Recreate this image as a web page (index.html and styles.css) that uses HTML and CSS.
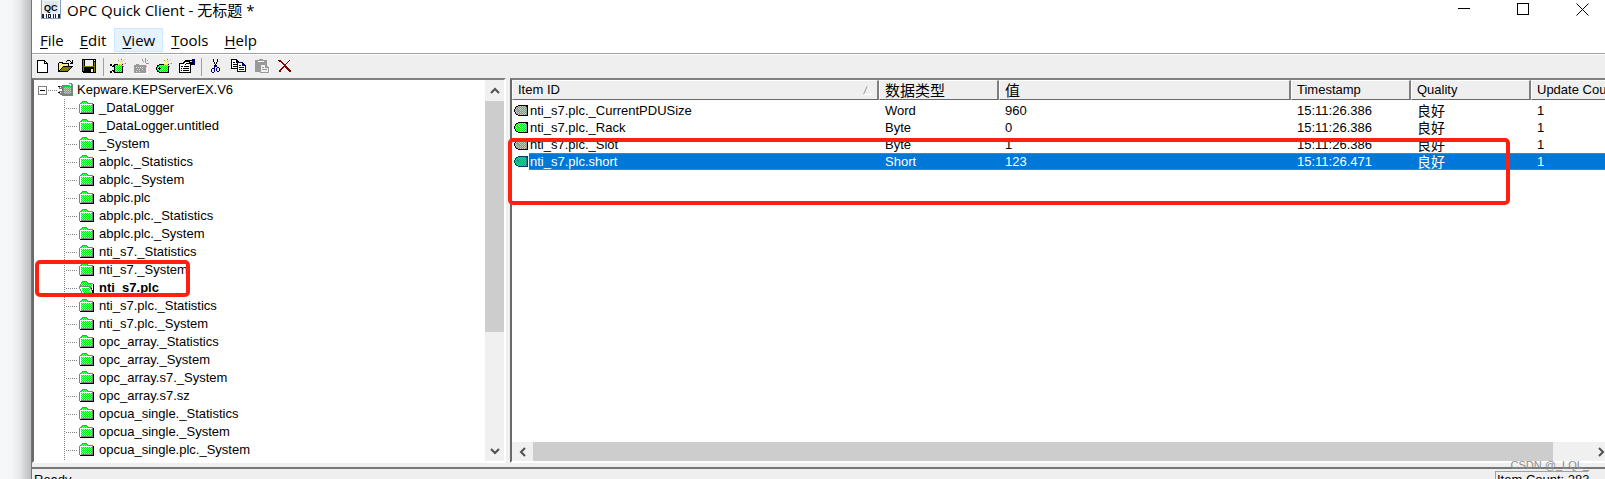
FILE: index.html
```html
<!DOCTYPE html>
<html lang="zh-CN">
<head>
<meta charset="utf-8">
<title>OPC Quick Client</title>
<link rel="stylesheet" href="styles.css">
</head>
<body>
<svg class="sprites" aria-hidden="true">
  <defs>
    <pattern id="dither" width="2" height="2" patternUnits="userSpaceOnUse"><path fill="#c4d8c4" d="M0 0h2v2H0z"/><path fill="#00ef18" d="M0 0h1v1H0zM1 1h1v1H1z"/></pattern>
    <pattern id="dither-teal" width="2" height="2" patternUnits="userSpaceOnUse"><path fill="#60a8b8" d="M0 0h2v2H0z"/><path fill="#00b578" d="M0 0h1v1H0zM1 1h1v1H1z"/></pattern>
    <symbol id="folder" viewBox="0 0 16 14">
      <path fill="#808080" d="M2 1h1V0h5v1h1v1h5v1H1V2h1zM0 3h1v9H0zM13 3h1v1h-1z"/>
      <path fill="url(#dither)" d="M3 1h5v1h1v1H2V2h1zM2 4h11v8H2z"/>
      <path fill="#808080" d="M9 2h5v1H9z"/>
      <path fill="#fff" d="M1 3h12v1H2v8H1z"/>
      <path fill="#808080" d="M13 3h1v9h-1zM1 12h12v-1H2v1z"/>
      <path fill="#000" d="M14 3h1v10H1v-1h13z"/>
    </symbol>
    <symbol id="folder-open" viewBox="0 0 16 14">
      <path fill="url(#dither)" d="M3 1h5l1 2h4v9H3L1 6h1z"/>
      <path fill="#fff" d="M1 6h9l3 5v1H3z"/>
      <path fill="url(#dither)" d="M3 7h7l3 5H4z"/>
      <path fill="#808080" d="M3 0h5v1H3zM2 1h1v2H2zM8 1h1v1H8zM9 2h5v1H9zM1 3h1v2H1zM0 5h11v1H0zM0 6h1v2H0zM1 8h1v2H1zM2 10h1v2H2zM11 6h1v2h-1zM12 8h1v2h-1z"/>
      <path fill="#000" d="M14 3h1v10H3v-1h11zM12 7h1v1h-1zM13 9h1v3h-1z"/>
    </symbol>
    <symbol id="server" viewBox="0 0 16 14">
      <path fill="#808080" d="M4 2h8v1h1V1h-2V0h3v1h1v12H4v-1H2v-1h2zM1 3h3v3H1zM1 8h3v3H1z"/>
      <path fill="#fff" d="M2 4h1v1H2zM2 9h1v1H2z"/><path fill="#000" d="M0 3h2v1H0zM0 9h2v1H0z"/>
      <path fill="#00d832" d="M5 3h8v8H5z"/><path fill="url(#dither)" d="M6 4h7v7H6z"/>
    </symbol>
    <symbol id="tag" viewBox="0 0 15 11">
      <path fill="#000" d="M4 0h10v11H4V10H2V9H1V7H0V4h1V2h1V1h2z"/>
      <path fill="url(#dither)" d="M4 1h8v9H4V9H2V7H1V4h1V2h2z"/><path fill="#999" d="M3 4h2v2H3zM12 2h1v8h-1z"/>
    </symbol>
    <symbol id="tag-selected" viewBox="0 0 15 11">
      <path fill="#003c70" d="M4 0h10v11H4V10H2V9H1V7H0V4h1V2h1V1h2z"/>
      <path fill="url(#dither-teal)" d="M4 1h8v9H4V9H2V7H1V4h1V2h2z"/><path fill="#4878a8" d="M3 4h2v2H3zM12 2h1v8h-1z"/>
    </symbol>
    <symbol id="rays" viewBox="0 0 16 16">
      <path fill="none" stroke="#f2e33c" d="M8.5 2.5l3 3M14.500 1.500l-3 3M11.500 0v4M15 5.500h-3M14.500 9.500l-3-3M8 6.500h3"/>
      <path fill="#8d8d45" d="M11 1h1v1h-1zM15 5h1v1h-1zM8 2h1v1H8zM13 8h1v1h-1z"/>
    </symbol>
  </defs>
</svg>

<div class="desktop">
<div class="window">
  <header class="titlebar">
    <svg class="app-icon" viewBox="0 0 20 20" aria-hidden="true">
      <path fill="#8a9bc4" d="M0 0h20v19H0z"/><path fill="#eef3fa" d="M1 0h18v18H1z"/><path fill="#dfe6ec" d="M3 1h14v12H3z"/>
      <text class="app-icon-text" x="3" y="11">QC</text>
      <path fill="#223" d="M1 14h2v4H1zM5 14h1v4H5zM7 14h3v1H7zM7 17h3v1H7zM7 15h1v2H7zM9 15h1v2H9zM12 14h1v4h-1zM14 14h1v4h-1zM17 14h2v4h-2z"/>
    </svg>
    <h1 class="title">OPC Quick Client - 无标题 *</h1>
    <div class="window-controls">
      <button class="control" aria-label="Minimize"><svg viewBox="0 0 13 13"><path d="M0 5.500h12"/></svg></button>
      <button class="control" aria-label="Maximize"><svg viewBox="0 0 13 13"><path d="M.5 .5h11v11H.5z"/></svg></button>
      <button class="control" aria-label="Close"><svg class="smooth" viewBox="0 0 13 13"><path d="M.5 .5l12 12M12.500 .5l-12 12"/></svg></button>
    </div>
  </header>
  <nav class="menubar">
    <button class="menu"><u>F</u>ile</button>
    <button class="menu"><u>E</u>dit</button>
    <button class="menu menu-hover"><u>V</u>iew</button>
    <button class="menu"><u>T</u>ools</button>
    <button class="menu"><u>H</u>elp</button>
  </nav>
  <div class="toolbar" role="toolbar">
    <button class="tool" aria-label="New"><svg viewBox="0 0 16 16"><path fill="#000" d="M2 2h8v1h1v1h1v1h1v10H2z"/><path fill="#fff" d="M3 3h6v3h3v8H3zM10 4h1v1h-1z"/></svg></button>
    <button class="tool" aria-label="Open"><svg viewBox="0 0 16 16"><path fill="#000" d="M9 2h3v1H9zM12 3h1v1h-1zM14 2h1v4h-3V5h1V4h1zM8 3h1v1H8zM1 4h4v1h6v3h4v1h-1v1h-1v1h-1v1h-1v1h-1v1H0V5h1z"/><path fill="#f5f08c" d="M1 5h3v1h6v2H5v1H4v1H3v1H2v1H1z"/><path fill="#808000" d="M5 9h8v1h-1v1h-1v1h-1v1H2v-1h1v-1h1v-1h1z"/></svg></button>
    <button class="tool" aria-label="Save"><svg viewBox="0 0 16 16"><path fill="#000" d="M1 1h14v14H2v-1H1z"/><path fill="#808000" d="M2 2h1v11H2zM13 4h1v10h-1zM3 8h10v1H3z"/><path fill="#efefef" d="M4 2h8v6H4zM13 2h1v1h-1zM10 11h2v3h-2z"/></svg></button>
    <span class="separator"></span>
    <button class="tool" aria-label="New server"><svg viewBox="0 0 16 16"><path fill="#000" d="M4 6h9v9H4v-1H2v1H0v-2h2v-1h2V9H2V8H0V6h2v1h2z"/><path fill="#fff" d="M2 7h1v1H2zM2 13h1v1H2z"/><path fill="url(#dither)" d="M5 7h7v7H5z"/><use href="#rays"/></svg></button>
    <button class="tool" aria-label="New group" disabled><svg viewBox="0 0 16 16"><path fill="#999" d="M1 7h2V6h3v1h7v8H1zM9 1h1v2H9zM12 0h1v5h-1zM14 2h1v1h-1zM13 5h3v1h-3zM10 3h1v1h-1zM13 8h2v1h-2z"/><path fill="#ddd" d="M3 9h1v1H3zM5 9h1v1H5zM7 9h1v1H7zM9 9h1v1H9zM4 11h1v1H4zM6 11h1v1H6zM9 11h1v1H9zM3 13h1v1H3zM6 13h1v1H6z"/><path fill="#fff" d="M2 15h12V8h1v8H2z"/></svg></button>
    <button class="tool" aria-label="New item"><svg viewBox="0 0 16 16"><path fill="#000" d="M3 6h10v9H3v-1H1v-2H0V9h1V7h2z"/><path fill="url(#dither)" d="M3 7h9v7H3v-1H2v-1H1V9h1V8h1z"/><path fill="#000" d="M3 9h1v1h1v1H4v1H3v-1H2v-1h1z"/><use href="#rays"/></svg></button>
    <button class="tool" aria-label="Properties"><svg viewBox="0 0 16 16"><path fill="#000" d="M0 5h4V4h1V3h1V2h7v1h-2v1h3v3h-2v8H0z"/><path fill="#fff" d="M1 6h10v8H1zM6 4h4v2H5V5h1z"/><path fill="#000080" d="M13 1h3v6h-2V4h-1z"/><path fill="#000" d="M2 8h2v1H2zM5 8h5v1H5zM2 10h1v1H2zM4 10h6v1H4zM2 12h1v1H2zM4 12h6v1H4zM7 5h4v1H7zM6 6h1v1H6z"/></svg></button>
    <span class="separator"></span>
    <button class="tool" aria-label="Cut"><svg viewBox="0 0 16 16"><path fill="#000" d="M5 1h1v3H5zM9 1h1v3H9zM6 4h1v2H6zM8 4h1v2H8zM7 6h1v3H7zM6 7h3v1H6z"/><path fill="#000080" d="M6 8h1v2H6zM8 8h1v1H8zM9 9h2v1H9zM8 10h1v3H8zM11 10h1v3h-1zM9 13h2v1H9zM4 10h2v1H4zM3 11h1v3H3zM6 10h1v4H6zM4 14h2v1H4z"/></svg></button>
    <button class="tool" aria-label="Copy"><svg viewBox="0 0 16 16"><path fill="#000" d="M0 1h6v1h1v1h1v1h1v7H0z"/><path fill="#fff" d="M1 2h4v3h3v5H1z"/><path fill="#000" d="M2 4h2v1H2zM2 6h4v1H2zM2 8h4v1H2z"/><path fill="#000080" d="M6 4h6v1h1v1h1v1h1v7H6z"/><path fill="#fff" d="M7 5h4v3h3v5H7z"/><path fill="#000080" d="M8 7h2v1H8zM8 9h5v1H8zM8 11h5v1H8z"/></svg></button>
    <button class="tool" aria-label="Paste" disabled><svg viewBox="0 0 16 16"><path fill="#999" d="M1 2h4V1h4v1h4v12H1z"/><path fill="#fff" d="M4 3h6v1H4z"/><path fill="#999" d="M6 6h6v1h1v1h1v1h1v6H6z"/><path fill="#efefef" d="M7 7h4v3h3v4H7z"/><path fill="#999" d="M8 9h2v1H8zM8 11h5v1H8z"/><path fill="#fff" d="M7 15h9V9h-1v6H7z"/></svg></button>
    <button class="tool" aria-label="Delete"><svg viewBox="0 0 16 16"><path fill="#800000" d="M1 2h3v1h1v1h1v1h1v1h2V5h1V4h1V3h1V2h1v1h-1v1h-1v1h-1v1H9v2h1v1h1v1h1v1h1v1h1v2h-2v-1h-1v-1h-1v-1H9v-1H8V9H7v1H6v1H5v1H4v2H2v-2h1v-1h1v-1h1V9h1V8h1V7H6V6H5V5H4V4H2V3H1z"/></svg></button>
  </div>

  <main class="workspace">
    <section class="pane tree-pane">
      <div class="tree">
        <div class="tree-root">
          <button class="toggle" aria-label="Collapse"></button><span class="root-dots"></span>
          <svg class="icon-server"><use href="#server"/></svg><span class="label">Kepware.KEPServerEX.V6</span>
        </div>
        <ul class="branches">
          <li><svg><use href="#folder"/></svg><span>_DataLogger</span></li>
          <li><svg><use href="#folder"/></svg><span>_DataLogger.untitled</span></li>
          <li><svg><use href="#folder"/></svg><span>_System</span></li>
          <li><svg><use href="#folder"/></svg><span>abplc._Statistics</span></li>
          <li><svg><use href="#folder"/></svg><span>abplc._System</span></li>
          <li><svg><use href="#folder"/></svg><span>abplc.plc</span></li>
          <li><svg><use href="#folder"/></svg><span>abplc.plc._Statistics</span></li>
          <li><svg><use href="#folder"/></svg><span>abplc.plc._System</span></li>
          <li><svg><use href="#folder"/></svg><span>nti_s7._Statistics</span></li>
          <li><svg><use href="#folder"/></svg><span>nti_s7._System</span></li>
          <li class="current"><svg><use href="#folder-open"/></svg><span>nti_s7.plc</span></li>
          <li><svg><use href="#folder"/></svg><span>nti_s7.plc._Statistics</span></li>
          <li><svg><use href="#folder"/></svg><span>nti_s7.plc._System</span></li>
          <li><svg><use href="#folder"/></svg><span>opc_array._Statistics</span></li>
          <li><svg><use href="#folder"/></svg><span>opc_array._System</span></li>
          <li><svg><use href="#folder"/></svg><span>opc_array.s7._System</span></li>
          <li><svg><use href="#folder"/></svg><span>opc_array.s7.sz</span></li>
          <li><svg><use href="#folder"/></svg><span>opcua_single._Statistics</span></li>
          <li><svg><use href="#folder"/></svg><span>opcua_single._System</span></li>
          <li><svg><use href="#folder"/></svg><span>opcua_single.plc._System</span></li>
          <li><svg><use href="#folder"/></svg></li>
        </ul>
      </div>
      <div class="scroll scroll-y">
        <button class="arrow" aria-label="Scroll up"><svg viewBox="0 0 10 10"><path d="M1 7l4-4 4 4"/></svg></button>
        <div class="track-y"><div class="thumb-y"></div></div>
        <button class="arrow" aria-label="Scroll down"><svg viewBox="0 0 10 10"><path d="M1 3l4 4 4-4"/></svg></button>
      </div>
      <div class="mark mark-tree"></div>
    </section>

    <section class="pane list-pane">
      <div class="list">
        <table class="items">
          <colgroup><col class="col-id"><col class="col-std"><col><col class="col-std"><col class="col-std"><col class="col-std"></colgroup>
          <thead>
            <tr><th><span class="sorted">Item ID<svg class="sort" viewBox="0 0 9 10"><path stroke="#999" d="M4.500 .5l-4 9"/><path stroke="#fff" d="M4.500 .5l4 9h-8"/></svg></span></th><th class="cjk">数据类型</th><th class="cjk">值</th><th>Timestamp</th><th>Quality</th><th>Update Count</th></tr>
          </thead>
          <tbody>
            <tr><td class="id"><span class="item"><svg><use href="#tag"/></svg><span class="name">nti_s7.plc._CurrentPDUSize</span></span></td><td>Word</td><td>960</td><td>15:11:26.386</td><td class="cjk">良好</td><td>1</td></tr>
            <tr><td class="id"><span class="item"><svg><use href="#tag"/></svg><span class="name">nti_s7.plc._Rack</span></span></td><td>Byte</td><td>0</td><td>15:11:26.386</td><td class="cjk">良好</td><td>1</td></tr>
            <tr><td class="id"><span class="item"><svg><use href="#tag"/></svg><span class="name">nti_s7.plc._Slot</span></span></td><td>Byte</td><td>1</td><td>15:11:26.386</td><td class="cjk">良好</td><td>1</td></tr>
            <tr class="selected"><td class="id"><span class="item"><svg><use href="#tag-selected"/></svg><span class="name">nti_s7.plc.short</span></span></td><td>Short</td><td>123</td><td>15:11:26.471</td><td class="cjk">良好</td><td>1</td></tr>
          </tbody>
        </table>
      </div>
      <div class="scroll scroll-x">
        <button class="arrow" aria-label="Scroll left"><svg viewBox="0 0 10 10"><path d="M7 1L3 5l4 4"/></svg></button>
        <div class="track-x"><div class="thumb-x"></div></div>
        <button class="arrow arrow-end" aria-label="Scroll right"><svg viewBox="0 0 10 10"><path d="M3 1l4 4-4 4"/></svg></button>
      </div>
      <div class="mark mark-list"></div>
    </section>
  </main>

  <footer class="statusbar"><span class="status">Ready</span><span class="count">Item Count: 283</span></footer>
</div>
<div class="watermark">CSDN @_LQL_</div>
</div>
</body>
</html>
```
FILE: styles.css
```css
* { box-sizing: border-box; }
body { margin: 0; overflow: hidden; font-family: "Liberation Sans", "Noto Sans CJK SC", sans-serif; font-size: 13px; color: #000; }
button { margin: 0; padding: 0; border: 0; background: none; font: inherit; color: inherit; }
svg { display: block; flex: none; shape-rendering: crispEdges; }
.sprites { position: absolute; width: 0; height: 0; }

.desktop { position: relative; height: 100vh; overflow: hidden; padding-left: 31px; background: linear-gradient(to right, #f7f8fa 0, #f5f6f8 12px, #e6e7e9 20px, #bcbcbe 31px); }
.window { display: flex; flex-direction: column; height: calc(100vh + 14px); border-left: 1px solid #777; background: #efefef; }

.titlebar { display: flex; align-items: flex-start; height: 28px; padding-left: 9px; background: #fff; }
.app-icon { width: 20px; height: 20px; margin-right: 6px; }
.app-icon-text { font-size: 9px; font-weight: bold; }
.title { flex: 1; margin: 0; font: 400 15px/20px "Open Sans", "Noto Sans CJK SC", sans-serif; }
.window-controls { display: flex; margin-right: -7px; }
.control { display: flex; justify-content: center; width: 59px; padding-top: 3px; }
.control svg { width: 13px; height: 13px; fill: none; stroke: #000; }
.control .smooth { shape-rendering: auto; }

.menubar { display: flex; height: 25px; padding-bottom: 1px; background: #fff; font: 15px/22px "Open Sans", sans-serif; }
.menu { padding: 0 7px; border: 1px solid transparent; }
.menu u { text-underline-offset: 2px; text-decoration-thickness: 1px; }
.menu-hover { border-color: #cce8ff; background: #e5f3ff; }

.toolbar { display: flex; height: 25px; border-top: 1px solid #a0a0a0; box-shadow: inset 0 1px #fff; }
.tool { display: flex; align-items: center; justify-content: center; width: 23px; padding-right: 2px; }
.tool svg { width: 16px; height: 16px; }
.separator { width: 1px; height: 18px; margin: 4px 3px 4px 2px; background: #a0a0a0; }

.workspace { display: flex; gap: 4px; flex: 1; min-height: 0; }
.pane { position: relative; display: flex; border: 2px solid; border-color: #808080 #fff #fff #696969; background: #fff; }
.tree-pane { width: 474px; }
.list-pane { flex: 1; flex-direction: column; min-width: 0; border-right: 0; }

.tree { flex: 1; overflow: hidden; padding-top: 1px; }
.tree-root { display: flex; align-items: center; height: 18px; padding-left: 4px; line-height: 18px; }
.toggle { width: 9px; height: 9px; border: 1px solid #808080; background: linear-gradient(#000, #000) center / 5px 1px no-repeat #fff; }
.root-dots { width: 9px; height: 1px; margin: 0 1px; background: repeating-linear-gradient(to right, #808080 0 1px, transparent 1px 2px); }
.icon-server { width: 16px; height: 14px; }
.label { margin-left: 3px; }
.branches { margin: 0 0 0 30px; padding: 0; list-style: none; background: repeating-linear-gradient(to bottom, #808080 0 1px, transparent 1px 2px) left / 1px 100% no-repeat; }
.branches li { display: flex; align-items: center; height: 18px; padding-left: 15px; line-height: 18px; background: repeating-linear-gradient(to right, #808080 0 1px, transparent 1px 2px) 2px 9px / 11px 1px no-repeat; }
.branches svg { width: 16px; height: 14px; margin-right: 4px; }
.current { font-weight: bold; }

.scroll { display: flex; background: #f0f0f0; }
.scroll-y { flex-direction: column; width: 19px; }
.scroll-x { height: 19px; }
.arrow { display: flex; align-items: center; justify-content: center; width: 21px; height: 100%; }
.arrow-end { margin-right: -6px; }
.scroll-y .arrow { width: 19px; height: 21px; }
.arrow svg { width: 10px; height: 10px; fill: none; stroke: #505050; stroke-width: 2; shape-rendering: auto; }
.track-y, .track-x { flex: 1; }
.thumb-y { height: 68%; background: #cdcdcd; }
.thumb-x { width: calc(100% - 37px); height: 100%; background: #cdcdcd; }

.list { flex: 1; overflow: hidden; }
.items { width: calc(100% + 46px); table-layout: fixed; border-collapse: separate; border-spacing: 0; }
.col-id { width: 367px; }
.col-std { width: 120px; }
.items th { height: 20px; padding: 0 5px; border: solid; border-width: 1px 2px 1px 1px; border-color: #fff #808080 #696969 #fff; background: #efefef; font-weight: 400; line-height: 18px; text-align: left; white-space: nowrap; }
.items .cjk { font-family: "Noto Sans CJK SC", sans-serif; font-size: 14px; }
.items th.cjk { font-size: 15px; line-height: 16px; }
.sorted { display: flex; align-items: center; justify-content: space-between; }
.sort { width: 9px; height: 10px; fill: none; shape-rendering: auto; }
.items td { height: 17px; padding: 0 6px; line-height: 17px; white-space: nowrap; }
.items tbody::before { content: ""; display: block; height: 2px; }
.items .id { padding: 0 0 0 2px; }
.item { display: flex; align-items: center; }
.item svg { width: 15px; height: 11px; }
.name { flex: 1; padding-left: 1px; }
.selected td { color: #fff; background: #0078d7; box-shadow: inset 0 1px #4f83a8, inset 0 -1px #4f83a8; }
.selected .id { background: linear-gradient(#fff, #fff) left / 17px 100% no-repeat #0078d7; box-shadow: none; }
.selected .name { box-shadow: inset 0 1px #4f83a8, inset 0 -1px #4f83a8; }

.mark { position: absolute; border: 4px solid #ff2010; border-radius: 5px; }
.mark-tree { top: 180px; left: 1px; width: 155px; height: 37px; }
.mark-list { top: 58px; left: -4px; right: 95px; height: 67px; }

.statusbar { display: flex; justify-content: space-between; height: 26px; margin-top: 4px; padding: 2px 16px 2px 2px; border-top: 2px solid #777; line-height: 18px; }
.count { width: 94px; padding-left: 1px; border: 1px solid #a0a0a0; border-right-color: #fff; line-height: 16px; white-space: nowrap; }
.watermark { position: absolute; right: 16px; bottom: 7px; color: #8c8c8c; font-size: 11px; line-height: 14px; }
```
